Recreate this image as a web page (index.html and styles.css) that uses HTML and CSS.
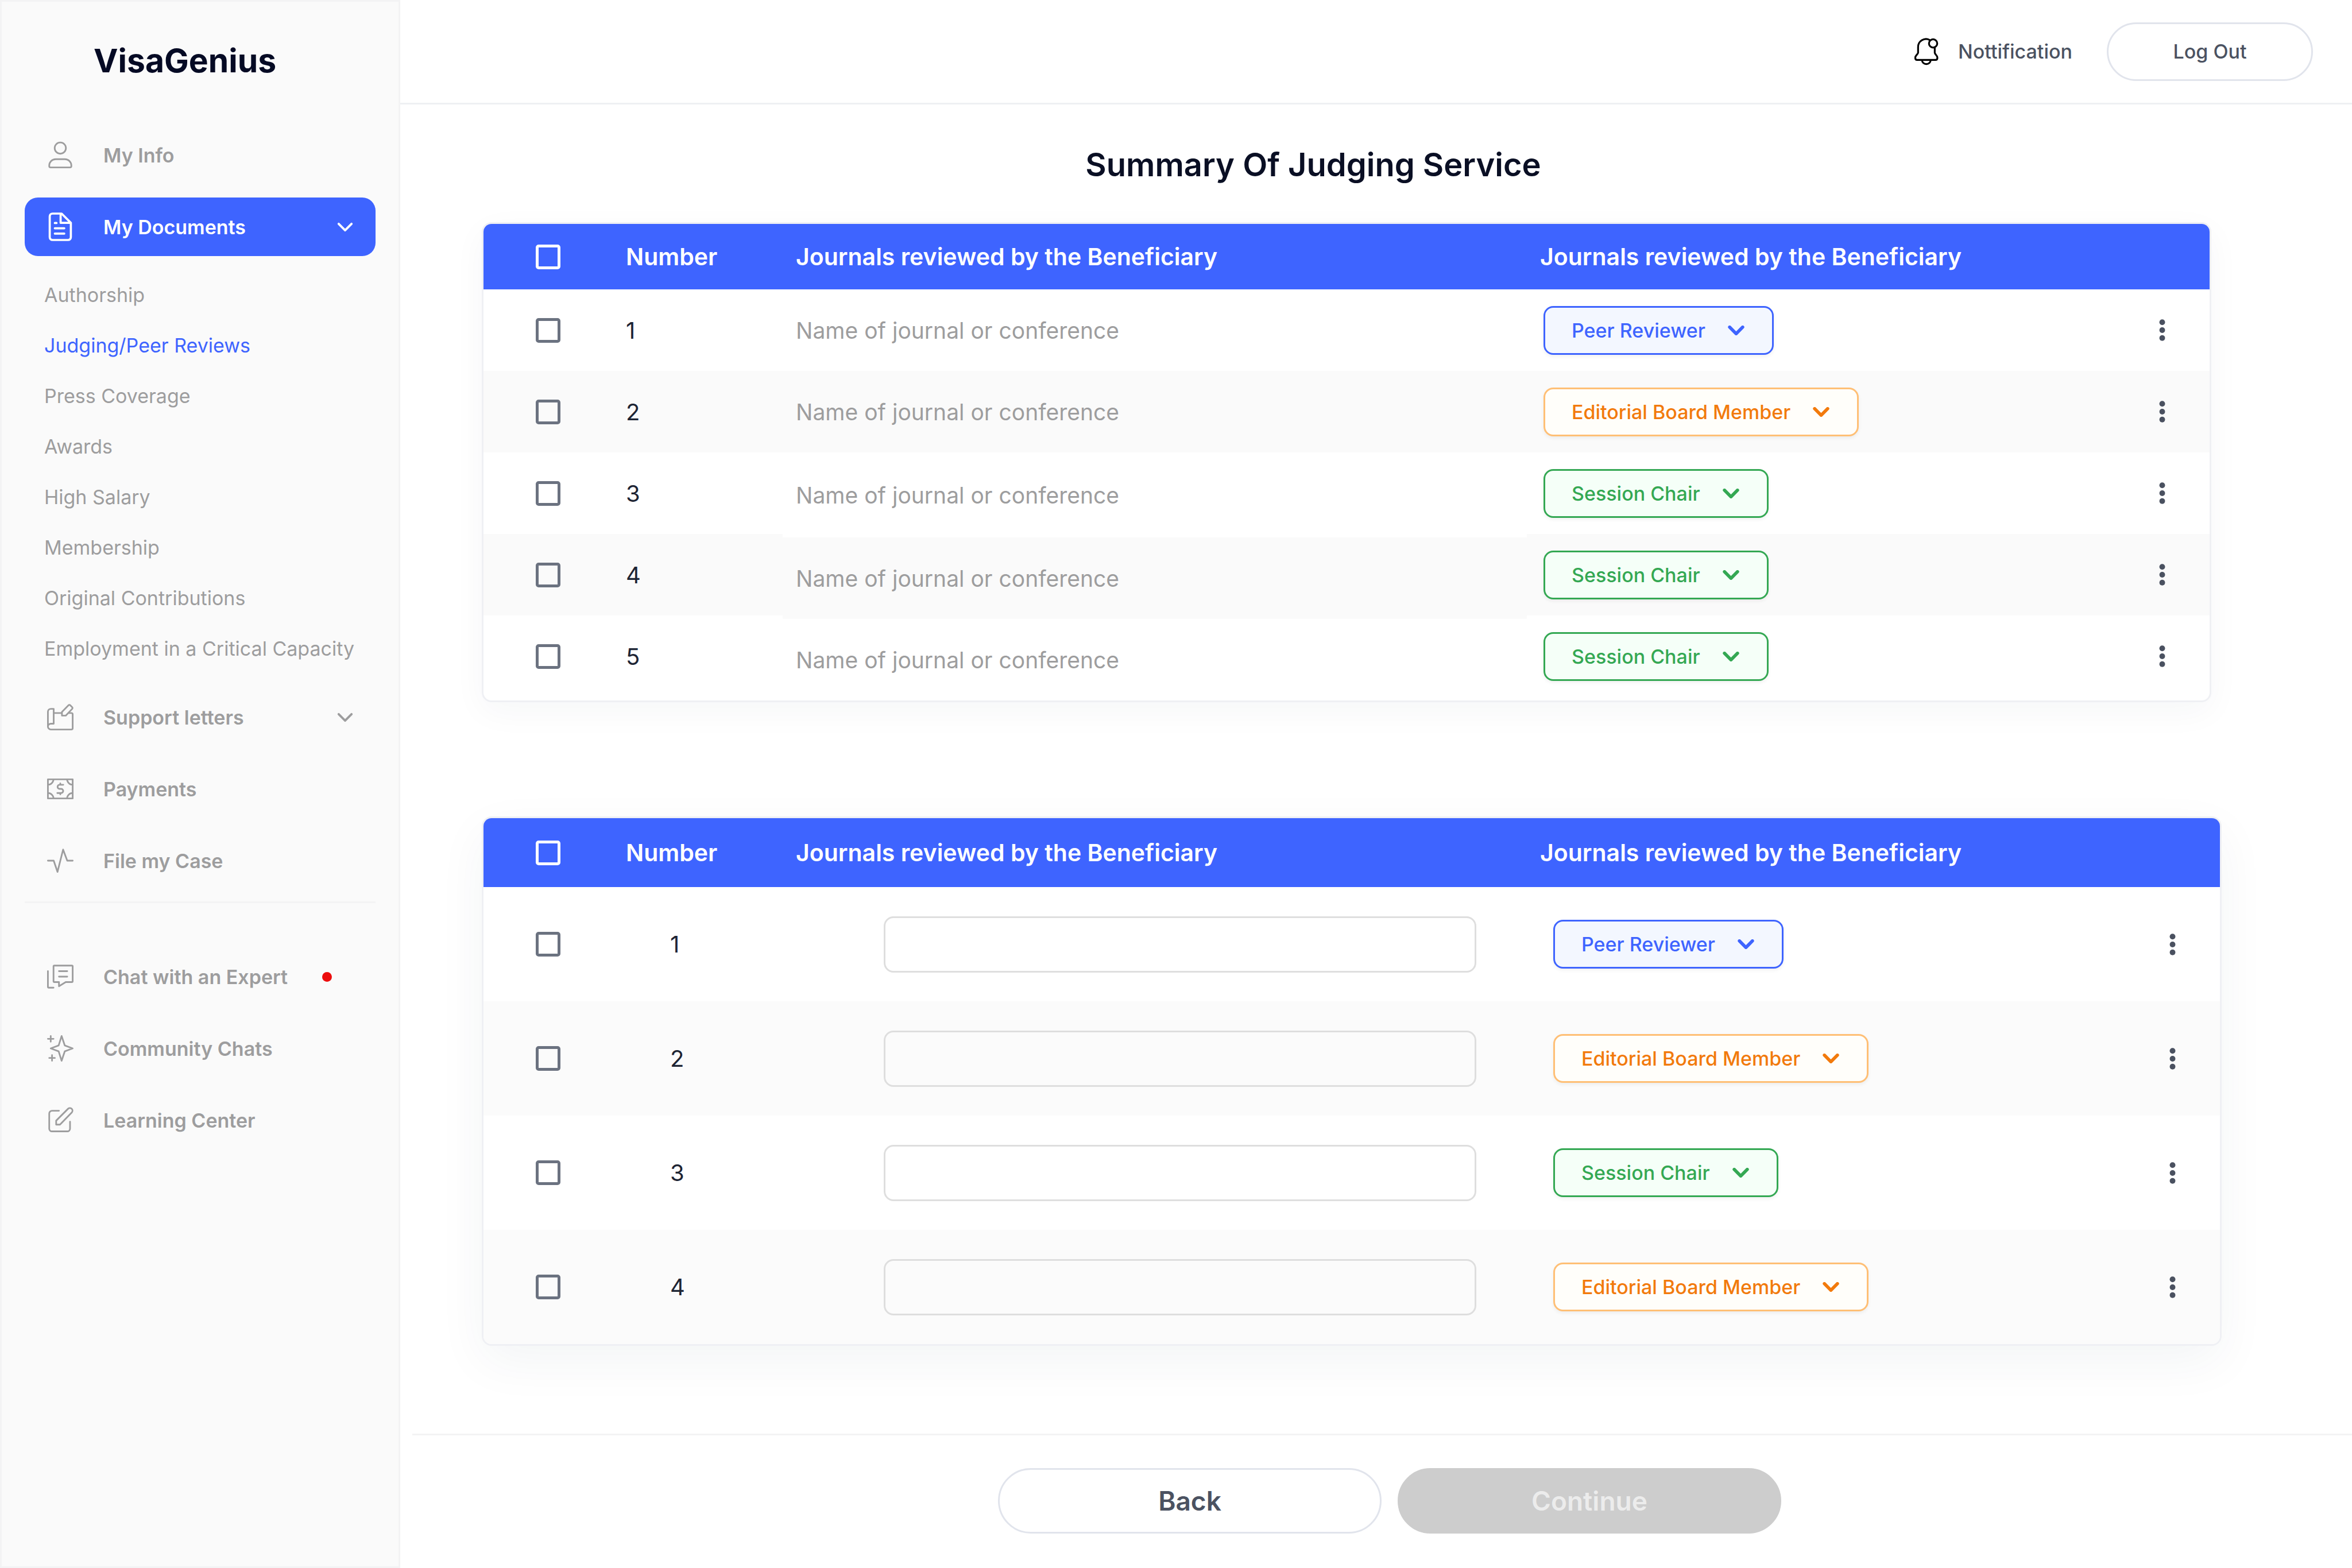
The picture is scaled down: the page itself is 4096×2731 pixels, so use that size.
FILE: index.html
```html
<!DOCTYPE html>
<html lang="en">
<head>
<meta charset="utf-8">
<title>VisaGenius</title>
<link rel="stylesheet" href="styles.css">
</head>
<body>
<svg class="sprite" aria-hidden="true">
  <symbol id="chevron" viewBox="0 0 10 6"><path d="M1 1l4 4 4-4"/></symbol>
  <symbol id="dots" viewBox="0 0 4 14"><circle cx="2" cy="2" r="1.8"/><circle cx="2" cy="7" r="1.8"/><circle cx="2" cy="12" r="1.8"/></symbol>
</svg>
<div class="app">
  <aside class="sidebar">
    <div class="logo">VisaGenius</div>
    <nav class="nav">
      <a class="nav-item" href="#">
        <svg class="icon" viewBox="0 0 16 16"><circle cx="8" cy="3.8" r="3.4"/><path d="M5.2 10.5h5.6a3.9 3.9 0 0 1 3.9 3.9v.3a.8.8 0 0 1-.8.8H2.1a.8.8 0 0 1-.8-.8v-.3a3.9 3.9 0 0 1 3.9-3.9Z"/></svg>
        <span>My Info</span>
      </a>
      <button class="nav-item nav-item-active" type="button" aria-expanded="true">
        <svg class="icon icon-bold" viewBox="0 0 16 16"><path d="M3.3 0H8.8L14.4 5.6V14.3A1.7 1.7 0 0 1 12.7 16H3.3A1.7 1.7 0 0 1 1.6 14.3V1.7A1.7 1.7 0 0 1 3.3 0ZM8.2 .2V5.6H14.2M4.7 5.7h1M4.7 8.9h5.7M4.7 12.1h5.7"/></svg>
        <span>My Documents</span>
        <svg class="nav-chevron"><use href="#chevron"/></svg>
      </button>
      <ul class="subnav">
        <li><a href="#">Authorship</a></li>
        <li><a class="current" href="#">Judging/Peer Reviews</a></li>
        <li><a href="#">Press Coverage</a></li>
        <li><a href="#">Awards</a></li>
        <li><a href="#">High Salary</a></li>
        <li><a href="#">Membership</a></li>
        <li><a href="#">Original Contributions</a></li>
        <li><a href="#">Employment in a Critical Capacity</a></li>
      </ul>
      <button class="nav-item" type="button" aria-expanded="false">
        <svg class="icon" viewBox="0 0 16 16"><path d="M4 12V3H2.3A1.8 1.8 0 0 0 .5 4.8V13.7A1.8 1.8 0 0 0 2.3 15.5H14.7A.8.8 0 0 0 15.5 14.7V6.3A.8.8 0 0 0 14.7 5.5H13.1M.5 13.7A1.8 1.8 0 0 1 2.3 12H4M4 5.5H8.6"/><path d="M9 4.9L13 .8a.7.7 0 0 1 1 0L15.2 2a.7.7 0 0 1 0 1L11.3 7.1H9Z"/></svg>
        <span>Support letters</span>
        <svg class="nav-chevron"><use href="#chevron"/></svg>
      </button>
      <a class="nav-item" href="#">
        <svg class="icon" viewBox="0 0 16 16"><path d="M.5 2.2H15.5V13.8H.5ZM3.9 2.2A3.4 3.4 0 0 1 .5 5.5M12.1 2.2A3.4 3.4 0 0 0 15.5 5.5M3.9 13.8A3.4 3.4 0 0 0 .5 10.5M12.1 13.8A3.4 3.4 0 0 1 15.5 10.5"/><path d="M9.8 5.5H7.6A1.25 1.25 0 0 0 7.6 8H8.5A1.25 1.25 0 0 1 8.5 10.5H6.2M8 4.7V5.5M8 10.5V11.3"/></svg>
        <span>Payments</span>
      </a>
      <a class="nav-item" href="#">
        <svg class="icon" viewBox="0 0 16 16"><path d="M.5 8H4L6.3 14.8L9.7 1.3L12.2 8H15.5"/></svg>
        <span>File my Case</span>
      </a>
    </nav>
    <hr class="divider">
    <nav class="nav">
      <a class="nav-item" href="#">
        <svg class="icon" viewBox="0 0 16 16"><path d="M4.4 1.3H15A.5.5 0 0 1 15.5 1.8V10.8A.5.5 0 0 1 15 11.3H11.3L7.2 13.8V11.3H4.4A.5.5 0 0 1 3.9 10.8V1.8A.5.5 0 0 1 4.4 1.3ZM7.2 4.7h5M7.2 8h5M.5 4.7V14.2A.5.5 0 0 0 1 14.7H3.9"/></svg>
        <span>Chat with an Expert</span>
        <i class="unread"></i>
      </a>
      <a class="nav-item" href="#">
        <svg class="icon" viewBox="0 0 16 16"><path d="M8.8 .5L10.7 6.2L15.5 8L10.7 9.8L8.8 15.5L7 9.8L2.2 8L7 6.2ZM.5 2.2H3.9M2.2 .5V3.9M1.3 13.8H4.7M3 12.1V15.5"/></svg>
        <span>Community Chats</span>
      </a>
      <a class="nav-item" href="#">
        <svg class="icon" viewBox="0 0 16 16"><path d="M7.2 2.3H3A1.7 1.7 0 0 0 1.3 4V13.1A1.7 1.7 0 0 0 3 14.8H12.2A1.7 1.7 0 0 0 13.9 13.1V8.9M5.5 8.3L12.8 1A1.6 1.6 0 0 1 15 3.3L7.8 10.7H5.5Z"/></svg>
        <span>Learning Center</span>
      </a>
    </nav>
  </aside>

  <div class="page">
    <header class="topbar">
      <a class="notify" href="#">
        <svg class="icon icon-bell" viewBox="0 0 16 16"><path d="M9.2 .9A4.8 4.8 0 0 0 2.2 5.3V8.7C1.7 10 .5 10.3 .5 11.7Q.5 13 1.6 13H12.8Q13.9 13 13.9 11.7C13.9 10.3 12.7 10 12.3 8.7V5.5M4.6 13.1A2.6 2.4 0 0 0 9.8 13.1"/><circle cx="11.3" cy="3" r="2.5"/></svg>
        <span>Nottification</span>
      </a>
      <button class="pill logout" type="button">Log Out</button>
    </header>

    <main class="content">
      <h1 class="title">Summary Of Judging Service</h1>

      <section class="card card-list">
        <table class="grid">
          <colgroup><col class="c-check"><col class="c-num"><col class="c-journal"><col><col class="c-menu"></colgroup>
          <thead>
            <tr><th><input class="check" type="checkbox" aria-label="Select all"></th><th>Number</th><th>Journals reviewed by the Beneficiary</th><th>Journals reviewed by the Beneficiary</th><th></th></tr>
          </thead>
          <tbody>
            <tr>
              <td><input class="check" type="checkbox" aria-label="Select 1"></td><td>1</td><td class="journal">Name of journal or conference</td>
              <td><span class="role role-blue"><select aria-label="Role 1"><option>Peer Reviewer</option></select><svg class="role-chevron"><use href="#chevron"/></svg></span></td>
              <td><button class="menu" type="button" aria-label="More"><svg><use href="#dots"/></svg></button></td>
            </tr>
            <tr>
              <td><input class="check" type="checkbox" aria-label="Select 2"></td><td>2</td><td class="journal">Name of journal or conference</td>
              <td><span class="role role-orange"><select aria-label="Role 2"><option>Editorial Board Member</option></select><svg class="role-chevron"><use href="#chevron"/></svg></span></td>
              <td><button class="menu" type="button" aria-label="More"><svg><use href="#dots"/></svg></button></td>
            </tr>
            <tr>
              <td><input class="check" type="checkbox" aria-label="Select 3"></td><td>3</td><td class="journal journal-tall">Name of journal or conference</td>
              <td><span class="role role-green"><select aria-label="Role 3"><option>Session Chair</option></select><svg class="role-chevron"><use href="#chevron"/></svg></span></td>
              <td><button class="menu" type="button" aria-label="More"><svg><use href="#dots"/></svg></button></td>
            </tr>
            <tr>
              <td><input class="check" type="checkbox" aria-label="Select 4"></td><td>4</td><td class="journal journal-after">Name of journal or conference</td>
              <td><span class="role role-green"><select aria-label="Role 4"><option>Session Chair</option></select><svg class="role-chevron"><use href="#chevron"/></svg></span></td>
              <td><button class="menu" type="button" aria-label="More"><svg><use href="#dots"/></svg></button></td>
            </tr>
            <tr>
              <td><input class="check" type="checkbox" aria-label="Select 5"></td><td>5</td><td class="journal journal-after">Name of journal or conference</td>
              <td><span class="role role-green"><select aria-label="Role 5"><option>Session Chair</option></select><svg class="role-chevron"><use href="#chevron"/></svg></span></td>
              <td><button class="menu" type="button" aria-label="More"><svg><use href="#dots"/></svg></button></td>
            </tr>
          </tbody>
        </table>
      </section>

      <section class="card card-form">
        <table class="grid">
          <colgroup><col class="c-check"><col class="c-num"><col class="c-journal"><col><col class="c-menu"></colgroup>
          <thead>
            <tr><th><input class="check" type="checkbox" aria-label="Select all"></th><th>Number</th><th>Journals reviewed by the Beneficiary</th><th>Journals reviewed by the Beneficiary</th><th></th></tr>
          </thead>
          <tbody>
            <tr>
              <td><input class="check" type="checkbox" aria-label="Select 1"></td><td>1</td><td><input class="field" type="text" aria-label="Journal 1"></td>
              <td><span class="role role-blue"><select aria-label="Role 1"><option>Peer Reviewer</option></select><svg class="role-chevron"><use href="#chevron"/></svg></span></td>
              <td><button class="menu" type="button" aria-label="More"><svg><use href="#dots"/></svg></button></td>
            </tr>
            <tr>
              <td><input class="check" type="checkbox" aria-label="Select 2"></td><td>2</td><td><input class="field" type="text" aria-label="Journal 2"></td>
              <td><span class="role role-orange"><select aria-label="Role 2"><option>Editorial Board Member</option></select><svg class="role-chevron"><use href="#chevron"/></svg></span></td>
              <td><button class="menu" type="button" aria-label="More"><svg><use href="#dots"/></svg></button></td>
            </tr>
            <tr>
              <td><input class="check" type="checkbox" aria-label="Select 3"></td><td>3</td><td><input class="field" type="text" aria-label="Journal 3"></td>
              <td><span class="role role-green"><select aria-label="Role 3"><option>Session Chair</option></select><svg class="role-chevron"><use href="#chevron"/></svg></span></td>
              <td><button class="menu" type="button" aria-label="More"><svg><use href="#dots"/></svg></button></td>
            </tr>
            <tr>
              <td><input class="check" type="checkbox" aria-label="Select 4"></td><td>4</td><td><input class="field" type="text" aria-label="Journal 4"></td>
              <td><span class="role role-orange"><select aria-label="Role 4"><option>Editorial Board Member</option></select><svg class="role-chevron"><use href="#chevron"/></svg></span></td>
              <td><button class="menu" type="button" aria-label="More"><svg><use href="#dots"/></svg></button></td>
            </tr>
          </tbody>
        </table>
      </section>
    </main>

    <footer class="actions">
      <button class="pill step" type="button">Back</button>
      <button class="pill step step-disabled" type="button" disabled>Continue</button>
    </footer>
  </div>
</div>
</body>
</html>
```

FILE: styles.css
```css
:root {
  --blue: #3e64ff;
  --gray: #9d9d9e;
  --slate: #4b5261;
  --line: #f3f3f4;
  --stripe: #fafafa;
}

*, *::before, *::after { box-sizing: border-box; }

body {
  margin: 0;
  background: #fff;
  font-family: Inter, "Liberation Sans", sans-serif;
  font-size: 34px;
  font-optical-sizing: none;
  color: #1d2433;
}

a { color: inherit; text-decoration: none; }
button, input, select { font: inherit; color: inherit; margin: 0; }
button { background: none; border: 0; padding: 0; cursor: pointer; }
.sprite { display: none; }

.app { display: flex; min-height: 100vh; }

/* Sidebar */
.sidebar {
  flex: 0 0 697px;
  padding: 68px 40px 0;
  background: #fafafa;
  border: 3px solid var(--line);
}

.logo {
  padding-left: 120px;
  margin-bottom: 78px;
  font-size: 57px;
  line-height: 70px;
  font-weight: 700;
  color: #050a24;
}

.nav { display: flex; flex-direction: column; gap: 23px; }

.nav-item {
  display: flex;
  align-items: center;
  height: 102px;
  padding: 0 39px;
  border-radius: 23px;
  font-weight: 600;
  white-space: nowrap;
  color: var(--gray);
}

.nav-item-active { background: var(--blue); color: #fff; }

.icon {
  flex: none;
  width: 46px;
  height: 46px;
  margin-right: 52px;
  overflow: visible;
  fill: none;
  stroke: currentColor;
  stroke-width: 1;
  stroke-linecap: round;
  stroke-linejoin: round;
}

.icon-bold { stroke-width: 1.3; }

.nav-chevron {
  width: 28px;
  height: 17px;
  margin-left: auto;
  overflow: visible;
  fill: none;
  stroke: currentColor;
  stroke-width: 1.4;
  stroke-linecap: round;
  stroke-linejoin: round;
}

.subnav { list-style: none; margin: 0; padding: 1px 0 1px 34px; }
.subnav a { display: block; line-height: 88px; color: var(--gray); white-space: nowrap; }
.subnav .current { color: var(--blue); }

.divider { height: 3px; margin: 20px 0 77px; border: 0; background: var(--line); }

.unread { width: 17px; height: 17px; margin-left: 60px; border-radius: 50%; background: #ec0d0d; }

/* Page */
.page { flex: 1; min-width: 0; display: flex; flex-direction: column; }

.topbar {
  display: flex;
  align-items: center;
  justify-content: flex-end;
  gap: 60px;
  height: 182px;
  padding: 0 68px;
  border-bottom: 3px solid #eef0f3;
}

.notify { display: flex; align-items: center; font-weight: 500; color: var(--slate); }
.icon-bell { margin-right: 30px; color: #000; stroke-width: 1.1; }

.pill {
  border: 3px solid #e1e4ec;
  border-radius: 57px;
  background: #fff;
  font-weight: 600;
  color: var(--slate);
}

.logout { width: 359px; height: 102px; font-weight: 500; }

.content { padding: 70px 227px 60px 142px; }

.title {
  margin: 0 0 65px;
  padding-right: 134px;
  font-size: 56px;
  line-height: 70px;
  font-weight: 600;
  text-align: center;
  color: #0a0f24;
}

.card {
  border: 3px solid #eff0f4;
  border-radius: 17px;
  overflow: hidden;
  background: #fff;
}

.card-list { margin: 0 18px 199px 0; padding-bottom: 6px; box-shadow: 0 17px 57px rgba(20, 50, 70, .04); }
.card-form { --stripe: #fbfbfb; box-shadow: 0 28px 85px rgba(20, 50, 70, .05); }

.grid {
  width: 100%;
  border-collapse: collapse;
  table-layout: fixed;
  font-size: 40px;
}

.c-check { width: 222px; }
.c-num { width: 299px; }
.c-journal { width: 1296px; }
.c-menu { width: 166px; }

.grid th {
  height: 114px;
  padding: 0 0 0 23px;
  background: var(--blue);
  font-size: 41px;
  font-weight: 600;
  text-align: left;
  color: #fff;
}

.grid td { height: 142px; padding: 0 0 0 23px; }
.grid tbody tr:nth-child(even) { background: var(--stripe); }
.grid th:first-child, .grid td:first-child { padding-left: 91px; }
.grid th:nth-child(2), .grid td:nth-child(2) { padding-left: 26px; }
.grid td:nth-child(4) { padding-left: 29px; }
.grid td:last-child { padding: 0; text-align: center; }

.card-form .grid th { height: 120px; }
.card-form .grid td { height: 199px; }
.card-form .grid td:nth-child(2) { padding-left: 103px; }
.card-form .grid td:nth-child(3) { padding: 0 88px 0 176px; }
.card-form .grid td:nth-child(4) { padding-left: 46px; }

/* The journal column runs slightly taller from the third row on */
.journal { font-size: 39px; color: var(--gray); }
.grid .journal-tall { padding-top: 6px; }
.grid .journal-after { padding-top: 12px; background: linear-gradient(#fff 6px, var(--stripe) 0); }
.grid tr:last-child .journal-after { background: linear-gradient(var(--stripe) 6px, #fff 0); }

.check {
  display: block;
  appearance: none;
  width: 43px;
  height: 43px;
  border: 5px solid #6b7280;
  border-radius: 5px;
}

th .check { border-color: #fff; }

.field {
  display: block;
  width: 100%;
  height: 98px;
  padding: 0 24px;
  border: 3px solid #dedede;
  border-radius: 17px;
  background: transparent;
}

.role { display: grid; justify-content: start; align-items: center; font-size: 34px; font-weight: 500; }

.role select {
  grid-area: 1 / 1;
  appearance: none;
  field-sizing: content;
  height: 85px;
  padding: 0 116px 0 46px;
  border: 3px solid;
  border-radius: 17px;
  box-shadow: 0 3px 6px rgba(0, 0, 0, .06);
}

.role-chevron {
  grid-area: 1 / 1;
  justify-self: end;
  width: 29px;
  height: 17px;
  margin-right: 51px;
  overflow: visible;
  pointer-events: none;
  fill: none;
  stroke: currentColor;
  stroke-width: 2;
  stroke-linecap: round;
  stroke-linejoin: round;
}

.role-blue { color: var(--blue); }
.role-blue select { background: #f3f7ff; border-color: var(--blue); }
.role-orange { color: #f27a0c; }
.role-orange select { background: #fffefa; border-color: #ffbf75; }
.role-green { color: #34a853; }
.role-green select { background: #f5fff8; border-color: #34a853; }

.menu { display: block; width: 40px; height: 60px; margin: 0 auto; }
.menu svg { display: block; width: 11px; height: 40px; margin: 0 auto; overflow: visible; fill: #4a5160; }

/* Footer actions */
.actions {
  display: flex;
  justify-content: center;
  gap: 28px;
  margin: auto 0 0 21px;
  padding: 57px 0 60px 26px;
  border-top: 3px solid var(--line);
}

.step { width: 668px; height: 114px; font-size: 46px; }
.step-disabled { border-color: #cdcdcd; background: #cdcdcd; color: #ececec; }
```
